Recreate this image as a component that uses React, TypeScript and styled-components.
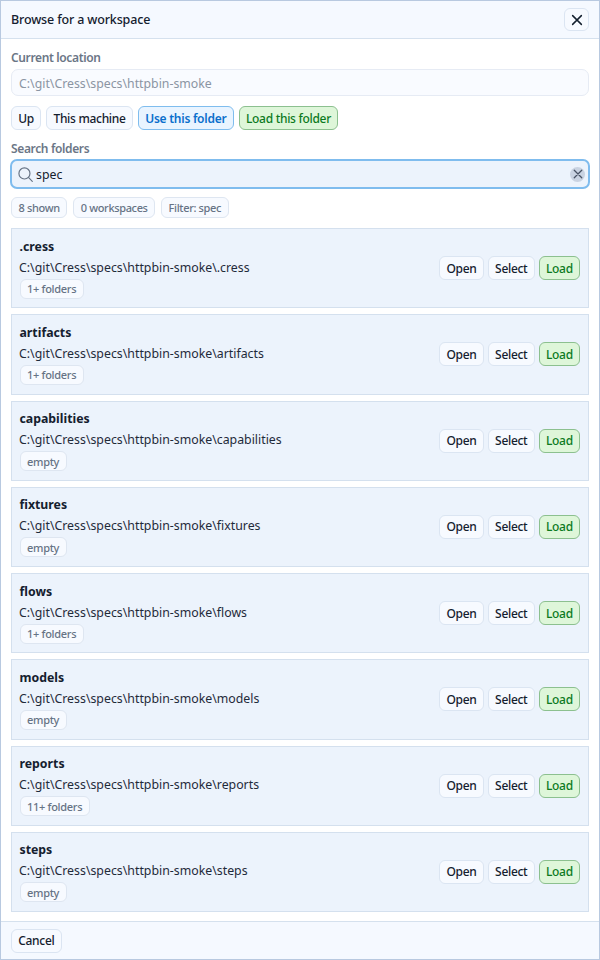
import React from "react";
import styled, { createGlobalStyle } from "styled-components";

const Global = createGlobalStyle`
  html, body { margin: 0; padding: 0; background: #fff; }
  body { font-family: "Noto Sans", "Open Sans", sans-serif; color: #16202e; }
  * { box-sizing: border-box; }
`;

const Dialog = styled.div`
  width: 600px; height: 960px; display: flex; flex-direction: column;
  border: 1px solid #b8c9e0; background: #fff; overflow: hidden;
`;
const Header = styled.div`
  height: 38px; flex: none; display: flex; align-items: center; justify-content: space-between;
  padding: 0 10px; background: #f5f9ff; border-bottom: 1px solid #d5e1ee;
`;
const Title = styled.div`font-size: 12.5px; letter-spacing: -0.15px; font-weight: 500; color: #14202e;`;
const CloseBtn = styled.button`
  width: 25px; height: 23px; padding: 0; display: flex; align-items: center; justify-content: center;
  background: #f7faff; border: 1px solid #dbe5f2; border-radius: 6px; color: #14202e;
`;
const Body = styled.div`
  flex: 1; display: flex; flex-direction: column; padding: 11px 10px 0; min-height: 0;
`;
const Label = styled.div`font-size: 12px; letter-spacing: -0.36px; font-weight: 600; color: #6b7686; line-height: 16px;`;
const LocationBox = styled.div`
  margin-top: 3px; height: 27px; display: flex; align-items: center; padding: 1px 7px 0;
  font-size: 12.3px; color: #8b95a3; background: #f9fbff; border: 1px solid #e6ebf4; border-radius: 7px;
`;
const Actions = styled.div`display: flex; gap: 5.2px; margin: 10px 0 11px;`;
const Btn = styled.button<{ $tone?: "blue" | "green" }>`
  height: 24px; padding: 0 6.2px; font-family: inherit; font-size: 12px; border-radius: 6px; white-space: nowrap;
  letter-spacing: ${(p) => (p.$tone === "blue" ? "-0.25px" : "-0.3px")};
  background: ${(p) => (p.$tone === "blue" ? "#e9f4ff" : p.$tone === "green" ? "#def6d9" : "#f7faff")};
  border: 1px solid ${(p) => (p.$tone === "blue" ? "#7fbdee" : p.$tone === "green" ? "#8cc08f" : "#dbe5f2")};
  color: ${(p) => (p.$tone === "blue" ? "#0a6fcc" : p.$tone === "green" ? "#0c7a1e" : "#14202e")};
  font-weight: ${(p) => (p.$tone === "blue" ? 600 : 500)};
`;
const SearchBox = styled.div`
  margin-top: 2px; height: 30px; display: flex; align-items: center; gap: 2px; padding: 0 2px 0 5px;
  background: #ecf3fc; border: 2.5px solid #7fbcee; border-radius: 7px; margin-left: -1px; margin-right: -1px;
  font-size: 12.3px; color: #14202e;
`;
const SearchText = styled.span`flex: 1;`;
const ClearBtn = styled.span`
  width: 15px; height: 15px; border-radius: 50%; background: #c9d3e2; display: flex; align-items: center; justify-content: center; color: #475264;
  margin-right: 1px;
`;
const Chips = styled.div`display: flex; gap: 6px; margin: 8px 0 10px;`;
const Chip = styled.span`
  height: 21px; padding: 0 6.5px; display: inline-flex; align-items: center; font-size: 11px; letter-spacing: -0.35px; font-weight: 500;
  color: #667385; background: #f7faff; border: 1px solid #dee6f1; border-radius: 6px; white-space: nowrap;
`;
const List = styled.div`display: flex; flex-direction: column; gap: 6px; flex: 1;`;
const Row = styled.div`
  height: 80.25px; display: flex; align-items: center; justify-content: space-between; padding: 0 8px 0 7.5px;
  background: #ecf3fc; border: 1px solid #d4e0ee;
`;
const Info = styled.div`display: flex; flex-direction: column; align-items: flex-start;`;
const Name = styled.div`font-size: 12.3px; font-weight: 700; color: #14202e; line-height: 17px;`;
const Path = styled.div`font-size: 12.33px; color: #1f2a3a; line-height: 21px; margin: 2px 0 -1px -0.5px;`;
const RowChip = styled(Chip)`margin-top: 2px; height: 20px; letter-spacing: -0.3px;`;
const RowActions = styled.div`display: flex; gap: 4.2px;`;
const Footer = styled.div`
  height: 38px; flex: none; display: flex; align-items: center; padding: 0 10px;
  background: #f5f9ff; border-top: 1px solid #d5e1ee;
`;

const rows = [
  [".cress", "1+ folders"],
  ["artifacts", "1+ folders"],
  ["capabilities", "empty"],
  ["fixtures", "empty"],
  ["flows", "1+ folders"],
  ["models", "empty"],
  ["reports", "11+ folders"],
  ["steps", "empty"],
];

const X = ({ s, w }: { s: number; w: number }) => (
  <svg width={s} height={s} viewBox="0 0 16 16" fill="none" stroke="currentColor" strokeWidth={w} strokeLinecap="round">
    <path d="M3 3l10 10M13 3L3 13" />
  </svg>
);

export default function App() {
  return (
    <Dialog>
      <Global />
      <Header>
        <Title>Browse for a workspace</Title>
        <CloseBtn aria-label="Close"><X s={14} w={1.7} /></CloseBtn>
      </Header>
      <Body>
        <Label>Current location</Label>
        <LocationBox>C:\git\Cress\specs\httpbin-smoke</LocationBox>
        <Actions>
          <Btn>Up</Btn>
          <Btn>This machine</Btn>
          <Btn $tone="blue">Use this folder</Btn>
          <Btn $tone="green">Load this folder</Btn>
        </Actions>
        <Label>Search folders</Label>
        <SearchBox>
          <svg width="17" height="17" viewBox="0 0 16 16" fill="none" stroke="#667385" strokeWidth="1.1">
            <circle cx="7" cy="7" r="5.2" />
            <path d="M11 11l3.4 3.4" strokeLinecap="round" />
          </svg>
          <SearchText>spec</SearchText>
          <ClearBtn><X s={12} w={1.7} /></ClearBtn>
        </SearchBox>
        <Chips>
          <Chip>8 shown</Chip>
          <Chip>0 workspaces</Chip>
          <Chip>Filter: spec</Chip>
        </Chips>
        <List>
          {rows.map(([name, meta]) => (
            <Row key={name}>
              <Info>
                <Name>{name}</Name>
                <Path>{`C:\\git\\Cress\\specs\\httpbin-smoke\\${name}`}</Path>
                <RowChip>{meta}</RowChip>
              </Info>
              <RowActions>
                <Btn>Open</Btn>
                <Btn>Select</Btn>
                <Btn $tone="green">Load</Btn>
              </RowActions>
            </Row>
          ))}
        </List>
      </Body>
      <Footer><Btn>Cancel</Btn></Footer>
    </Dialog>
  );
}
